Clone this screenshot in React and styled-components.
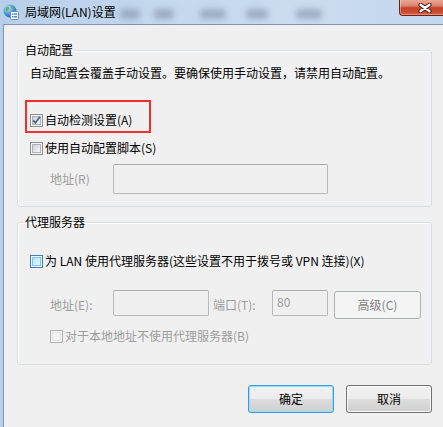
import React from 'react';
import styled, { createGlobalStyle, css } from 'styled-components';

const Global = createGlobalStyle`
  html, body { margin: 0; padding: 0; background: #f0f0f0; }
  body {
    font-family: "Noto Sans CJK SC", "Noto Sans", "Liberation Sans", sans-serif;
    font-size: 12px;
    color: #000;
  }
  * { box-sizing: border-box; }
`;

const Window = styled.div`
  width: 443px;
  height: 427px;
  overflow: hidden;
  display: flex;
  flex-direction: column;
  background: linear-gradient(90deg, #b7cfe9 0%, #c4d8ee 35%, #cbdcf0 70%, #c3d7ed 100%);
`;

const TitleBar = styled.div`
  height: 24px;
  flex: none;
  display: flex;
  align-items: center;
  padding-left: 3px;
`;

const TitleText = styled.span`
  margin-left: 6px;
  line-height: 16px;
  font-size: 12px;
  white-space: nowrap;
`;

const Blob = styled.span`
  flex: none;
  width: ${p => p.$w}px;
  height: 10px;
  margin-left: ${p => p.$ml}px;
  margin-top: 4px;
  border-radius: 4px;
  background: #6f8098;
  opacity: 0.5;
  filter: blur(3px);
`;

const Close = styled.div`
  margin-left: auto;
  align-self: flex-start;
  flex: none;
  width: 44px;
  height: 16px;
  border: 1px solid #6a2418;
  border-top: none;
  border-right: none;
  border-radius: 0 0 0 4px;
  background: linear-gradient(#e8a896 0%, #dc826b 40%, #c8432b 52%, #cc4a30 80%, #dc6c4c 100%);
  box-shadow: inset 1px 0 0 rgba(255, 255, 255, 0.35), inset 0 -1px 0 rgba(255, 255, 255, 0.25);
  display: flex;
  align-items: center;
  justify-content: center;
  padding-left: 6px;
`;

const Frame = styled.div`
  flex: 1;
  display: flex;
  padding-left: 3px;
`;

const Client = styled.div`
  flex: 1;
  background: #f0f0f0;
  border-top: 1px solid #8094ad;
  border-left: 1px solid #8094ad;
  padding-top: 17px;
  display: flex;
  flex-direction: column;
`;

const Group = styled.fieldset`
  margin: ${p => p.$mt || 0}px 0 0 13px;
  padding: 0;
  width: 415px;
  min-width: 0;
  border: 1px solid #d5dfe5;
  border-radius: 3px;
  box-shadow: inset 1px 1px 0 #ffffff;
`;

const Legend = styled.legend`
  margin-left: 5px;
  padding: 0 2px;
  line-height: 16px;
  font-size: 12px;
`;

const GroupBody = styled.div`
  display: flex;
  flex-direction: column;
  align-items: flex-start;
  padding: ${p => p.$pt}px 0 ${p => p.$pb}px 12px;
`;

const Text = styled.div`
  line-height: 16px;
  white-space: nowrap;
`;

const Highlight = styled.div`
  margin: 19px 0 0 -5px;
  width: 126px;
  border: 2px solid #ee2f2f;
  padding: 10px 0 3px 3px;
`;

const CheckRow = styled.label`
  display: flex;
  align-items: center;
  gap: 2px;
  height: 16px;
  line-height: 16px;
  white-space: nowrap;
  margin-top: ${p => p.$mt || 0}px;
  margin-left: ${p => p.$ml || 0}px;
  color: ${p => (p.$disabled ? '#9d9d9d' : '#000')};
`;

const boxVariants = {
  normal: css`
    border-color: #8e8f8f;
    & > span {
      border-color: #aeb3b9;
      background: linear-gradient(135deg, #cbcfd5 0%, #e4e6e9 55%, #f7f7f7 100%);
    }
  `,
  hover: css`
    border-color: #3c7fb1;
    & > span {
      border-color: #79c6f9;
      background: linear-gradient(135deg, #b1dffd 0%, #d5effd 55%, #e9f7fe 100%);
    }
  `,
  disabled: css`
    border-color: #b1b1b1;
    & > span {
      border-color: #e3e3e3;
      background: #f4f4f4;
    }
  `,
};

const Box = styled.span`
  flex: none;
  width: 13px;
  height: 13px;
  border: 1px solid;
  background: #f4f4f4;
  padding: 1px;
  display: flex;
  & > span {
    flex: 1;
    border: 1px solid;
    display: flex;
  }
  ${p => boxVariants[p.$variant || 'normal']}
`;

const Check = () => (
  <svg width="9" height="9" viewBox="0 0 9 9" style={{ overflow: 'visible', margin: '-1px' }}>
    <path d="M1.2 4.4 L3.4 6.9 L7.9 0.8" fill="none" stroke="#4a5f8f" strokeWidth="1.7" />
  </svg>
);

const Checkbox = ({ variant, checked }) => (
  <Box $variant={variant}>
    <span>{checked && <Check />}</span>
  </Box>
);

const FieldRow = styled.div`
  display: flex;
  align-items: ${p => p.$align || 'center'};
  margin-top: ${p => p.$mt || 0}px;
  margin-left: ${p => p.$ml || 0}px;
`;

const FieldLabel = styled.span`
  flex: none;
  width: ${p => p.$w}px;
  margin-left: ${p => p.$ml || 0}px;
  color: #9d9d9d;
  line-height: 16px;
  white-space: nowrap;
  align-self: center;
`;

const Input = styled.div`
  flex: none;
  width: ${p => p.$w}px;
  height: ${p => p.$h}px;
  border: 1px solid #b9b9b9;
  border-top-color: #adadad;
  border-radius: 2px;
  background: #f0f0f0;
  color: #9d9d9d;
  padding: 3px 0 0 4px;
  line-height: 16px;
`;

const Button = styled.div`
  flex: none;
  width: ${p => p.$w}px;
  height: 28px;
  margin-left: ${p => p.$ml || 0}px;
  margin-top: ${p => p.$mt || 0}px;
  border-radius: 3px;
  display: flex;
  align-items: center;
  justify-content: center;
  line-height: 16px;
  font-size: 12px;
  ${p =>
    p.$disabled
      ? css`
          border: 1px solid #adb2b5;
          background: #f4f4f4;
          color: #838383;
        `
      : css`
          border: 1px solid ${p.$default ? '#3c9be0' : '#707070'};
          color: #000;
          background: linear-gradient(#f2f2f2 0%, #ebebeb 50%, #dddddd 51%, #cfcfcf 100%);
          box-shadow: inset 0 0 0 1px ${p.$default ? '#8ae3fd' : '#fbfbfb'};
        `}
`;

const ButtonRow = styled.div`
  display: flex;
  justify-content: flex-end;
  gap: 12px;
  margin: 20px 11px 0 0;
`;

const AppIcon = () => (
  <svg width="16" height="16" viewBox="0 0 16 16">
    <defs>
      <radialGradient id="g" cx="0.35" cy="0.3" r="0.8">
        <stop offset="0" stopColor="#bfe6ff" />
        <stop offset="0.6" stopColor="#3d8fd8" />
        <stop offset="1" stopColor="#1d5aa6" />
      </radialGradient>
    </defs>
    <circle cx="7" cy="7" r="6.5" fill="url(#g)" />
    <path d="M3 3.5 C4.5 2.5 6 3 6.5 4.5 C6 6 4.5 6 4 7.5 C3 7 2 5.5 3 3.5 Z" fill="#5fb548" />
    <path d="M8 2 C10 2 11.5 3.5 11.5 5 C10.5 5 9.5 4.5 8.5 4 Z" fill="#5fb548" />
    <rect x="7.5" y="7.5" width="8" height="8" rx="1" fill="#f4f8fc" stroke="#6b8fb8" />
    <rect x="9" y="9.5" width="1.5" height="1.2" fill="#2f6fbf" />
    <rect x="11" y="9.5" width="3" height="1.2" fill="#2f6fbf" />
    <rect x="9" y="12.2" width="1.5" height="1.2" fill="#2f6fbf" />
    <rect x="11" y="12.2" width="3" height="1.2" fill="#2f6fbf" />
  </svg>
);

const CloseGlyph = () => (
  <svg width="14" height="10" viewBox="0 0 14 10">
    <path d="M2.5 1.8 L11.5 8.2 M11.5 1.8 L2.5 8.2" stroke="#4a1a12" strokeWidth="4.2" strokeLinecap="round" />
    <path d="M2.5 1.8 L11.5 8.2 M11.5 1.8 L2.5 8.2" stroke="#ffffff" strokeWidth="2.3" strokeLinecap="round" />
  </svg>
);

const blobs = [
  { w: 20, ml: 4 },
  { w: 20, ml: 14 },
  { w: 26, ml: 26 },
  { w: 22, ml: 20 },
  { w: 26, ml: 28 },
];

export default function App() {
  return (
    <>
      <Global />
      <Window>
        <TitleBar>
          <AppIcon />
          <TitleText>局域网(LAN)设置</TitleText>
          {blobs.map((b, i) => (
            <Blob key={i} $w={b.w} $ml={b.ml} />
          ))}
          <Close>
            <CloseGlyph />
          </Close>
        </TitleBar>
        <Frame>
          <Client>
            <Group>
              <Legend>自动配置</Legend>
              <GroupBody $pt={7} $pb={12}>
                <Text>自动配置会覆盖手动设置。要确保使用手动设置，请禁用自动配置。</Text>
                <Highlight>
                  <CheckRow>
                    <Checkbox checked />
                    自动检测设置(A)
                  </CheckRow>
                </Highlight>
                <CheckRow $mt={7}>
                  <Checkbox />
                  使用自动配置脚本(S)
                </CheckRow>
                <FieldRow $mt={8}>
                  <FieldLabel $w={63} $ml={20}>地址(R)</FieldLabel>
                  <Input $w={215} $h={30} />
                </FieldRow>
              </GroupBody>
            </Group>
            <Group $mt={7}>
              <Legend>代理服务器</Legend>
              <GroupBody $pt={23} $pb={20}>
                <CheckRow>
                  <Checkbox variant="hover" />
                  为 LAN 使用代理服务器(这些设置不用于拨号或 VPN 连接)(X)
                </CheckRow>
                <FieldRow $mt={21} $align="flex-start">
                  <FieldLabel $w={63} $ml={20}>地址(E):</FieldLabel>
                  <Input $w={96} $h={26} />
                  <FieldLabel $w={59} $ml={4}>端口(T):</FieldLabel>
                  <Input $w={56} $h={26}>80</Input>
                  <Button $w={87} $ml={6} $mt={1} $disabled>高级(C)</Button>
                </FieldRow>
                <CheckRow $mt={9} $ml={20} $disabled>
                  <Checkbox variant="disabled" />
                  对于本地地址不使用代理服务器(B)
                </CheckRow>
              </GroupBody>
            </Group>
            <ButtonRow>
              <Button $w={86} $default>确定</Button>
              <Button $w={86}>取消</Button>
            </ButtonRow>
          </Client>
        </Frame>
      </Window>
    </>
  );
}
